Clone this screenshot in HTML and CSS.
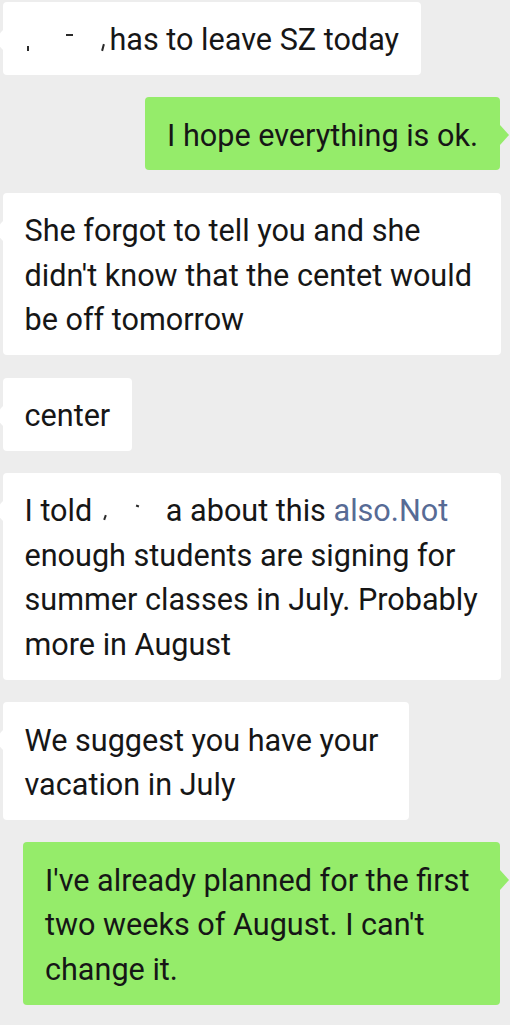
FILE: index.html
```html
<!DOCTYPE html>
<html>
<head>
<meta charset="utf-8">
<link rel="stylesheet" href="styles.css">
</head>
<body>
<div class="chat">
  <div class="bubble in"><span class="redact r1"><i class="m1"></i><i class="m2"></i><i class="m3"></i></span>has to leave SZ today</div>
  <div class="bubble out">I hope everything is ok.</div>
  <div class="bubble in full">She forgot to tell you and she<br>didn't know that the centet would<br>be off tomorrow</div>
  <div class="bubble in">center</div>
  <div class="bubble in full">I told <span class="redact r2"><i class="m4"></i><i class="m5"></i></span>a about this <span class="link">also.Not</span><br>enough students are signing for<br>summer classes in July. Probably<br>more in August</div>
  <div class="bubble in w406">We suggest you have your<br>vacation in July</div>
  <div class="bubble out w477">I've already planned for the first<br>two weeks of August. I can't<br>change it.</div>
</div>
</body>
</html>
```
FILE: styles.css
```css
html, body {
  margin: 0;
  padding: 0;
  background: #ededed;
}
body {
  width: 510px;
  height: 1025px;
  overflow: hidden;
}
.chat {
  display: flex;
  flex-direction: column;
  gap: 22.5px;
  padding-top: 2px;
}
.bubble {
  position: relative;
  box-sizing: border-box;
  font-family: Roboto, "Noto Sans", sans-serif;
  font-size: 30.6px;
  line-height: 44.6px;
  color: #161616;
  white-space: nowrap;
  padding: 16.2px 22px 12.2px 22px;
  border-radius: 4px;
}
.bubble.in {
  align-self: flex-start;
  margin-left: 2.5px;
  background: #ffffff;
}
.bubble.out {
  align-self: flex-end;
  margin-right: 10px;
  background: #95ec6a;
}
.bubble.full { width: 498px; }
.bubble.w406 { width: 406px; }
.bubble.w477 { width: 477px; }
.bubble::before {
  content: "";
  position: absolute;
  top: 28px;
  width: 0;
  height: 0;
  border-top: 10px solid transparent;
  border-bottom: 10px solid transparent;
}
.bubble.in::before {
  left: -9px;
  border-right: 9px solid #ffffff;
}
.bubble.out::before {
  right: -9px;
  border-left: 9px solid #95ec6a;
}
.link {
  color: #576b95;
}
.redact {
  position: relative;
  display: inline-block;
  height: 10px;
}
.redact.r1 { width: 85px; }
.redact.r2 { width: 66px; }
.redact i {
  position: absolute;
  background: #2a2a2a;
}
.m1 { left: 2px; top: 6px; width: 2px; height: 5px; }
.m2 { left: 41px; top: -6px; width: 7px; height: 2px; }
.m3 { left: 77px; top: 4px; width: 2px; height: 7px; transform: rotate(15deg); }
.m4 { left: 4px; top: 4px; width: 2px; height: 5px; transform: rotate(20deg); }
.m5 { left: 36px; top: -6px; width: 3px; height: 2px; transform: rotate(20deg); }
```
